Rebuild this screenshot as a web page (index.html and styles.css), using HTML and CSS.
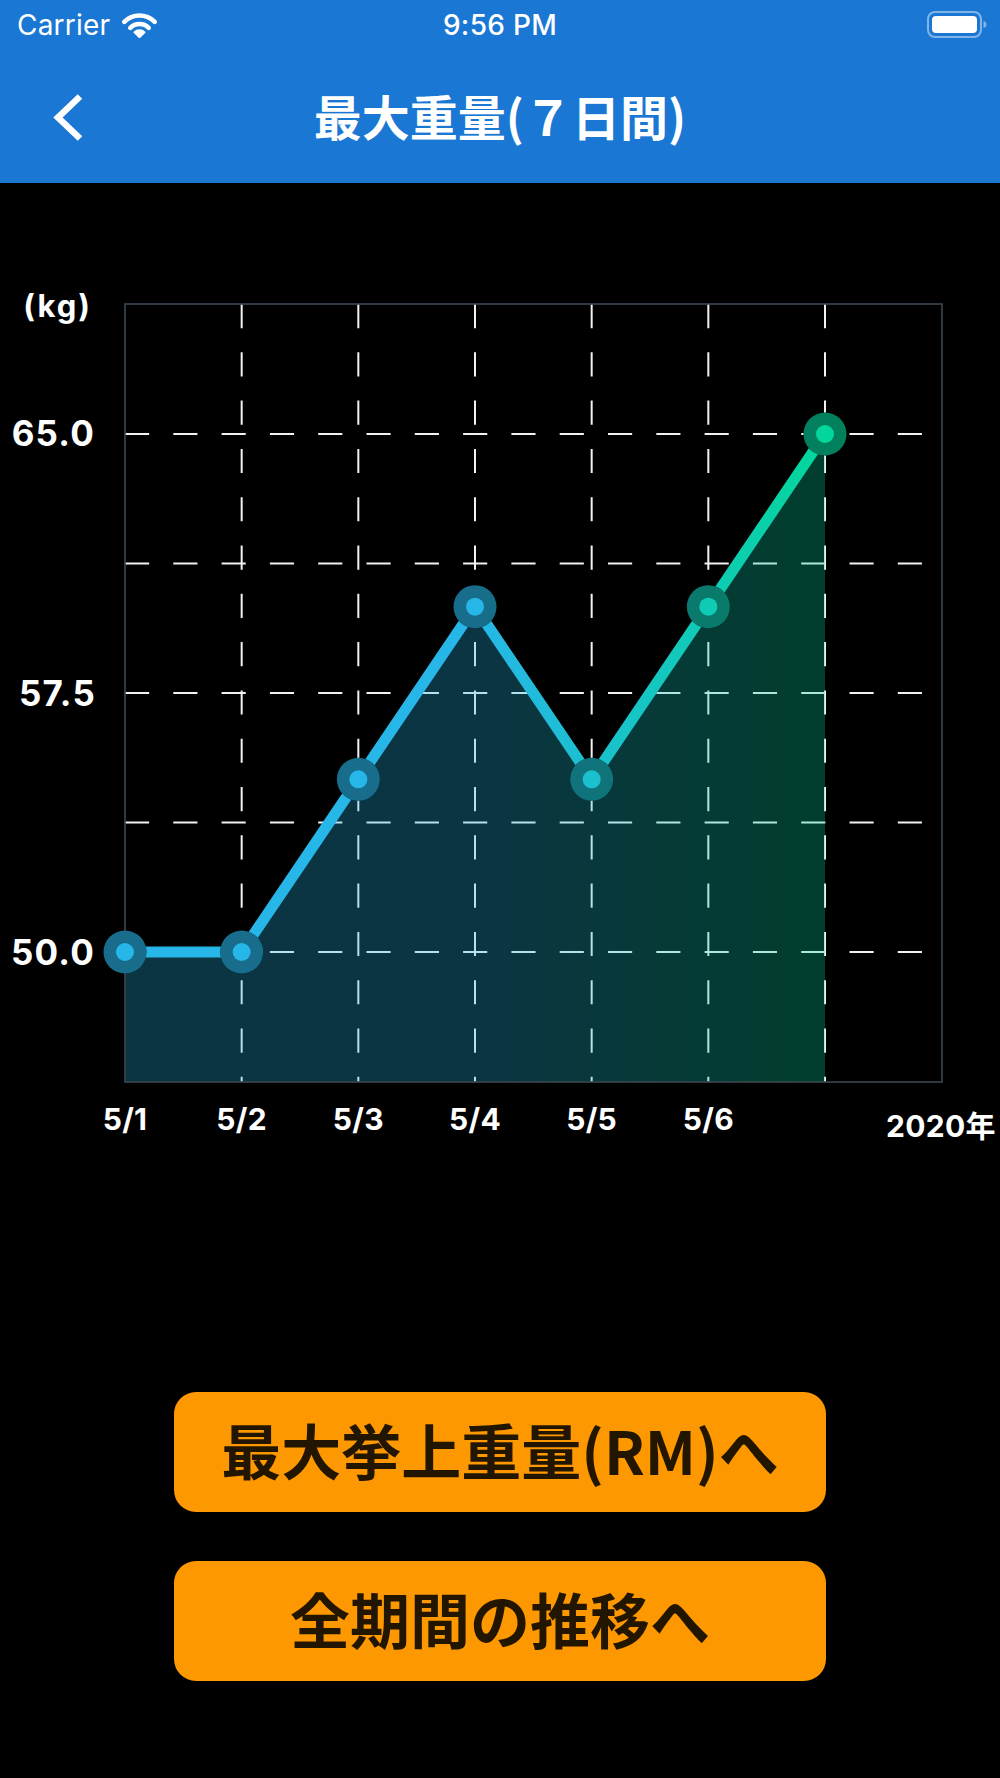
FILE: index.html
```html
<!DOCTYPE html>
<html lang="ja">
<head>
<meta charset="utf-8">
<title>最大重量(７日間)</title>
<link rel="stylesheet" href="styles.css">
</head>
<body>
<div class="screen">
  <header class="appbar">
    <div class="statusbar">
      <div class="sb-left">
        <span class="carrier">Carrier</span>
        <svg class="wifi" width="37" height="26" viewBox="0 0 37 26">
          <path d="M3.3 9.8 A21.5 21.5 0 0 1 33.7 9.8" fill="none" stroke="#fff" stroke-width="4.6" stroke-linecap="round"/>
          <path d="M9.3 15.8 A13 13 0 0 1 27.7 15.8" fill="none" stroke="#fff" stroke-width="4.6" stroke-linecap="round"/>
          <path d="M18.5 25.5 L13.2 20.2 A7.5 7.5 0 0 1 23.8 20.2 Z" fill="#fff" stroke="#fff" stroke-width="1.5" stroke-linejoin="round"/>
        </svg>
      </div>
      <div class="sb-time">9:56 PM</div>
      <div class="sb-right">
        <svg class="battery" width="60" height="28" viewBox="0 0 60 28">
          <rect x="1" y="1" width="53" height="25" rx="7" fill="none" stroke="#fff" stroke-opacity="0.45" stroke-width="2"/>
          <rect x="5" y="5" width="45" height="17" rx="4" fill="#fff"/>
          <path d="M56.5 10 Q59.5 10.5 59.5 13.5 Q59.5 16.5 56.5 17 Z" fill="#fff" fill-opacity="0.45"/>
        </svg>
      </div>
    </div>
    <nav class="navbar">
      <div class="nav-left">
        <button class="back" aria-label="戻る">
          <svg width="32" height="50" viewBox="0 0 32 50">
            <polyline points="28,4.5 6,25.5 28,46.5" fill="none" stroke="#fff" stroke-width="6.5" stroke-linejoin="miter"/>
          </svg>
        </button>
      </div>
      <h1 class="title">最大重量(７日間)</h1>
      <div class="nav-right"></div>
    </nav>
  </header>

  <main class="content">
    <figure class="chart">
      <svg class="chart-svg" width="1000" height="1000" viewBox="0 183 1000 1000">
        <defs>
          <linearGradient id="lg" gradientUnits="userSpaceOnUse" x1="125" y1="0" x2="825" y2="0">
            <stop offset="0" stop-color="#27b6e8"/>
            <stop offset="0.5" stop-color="#27b6e8"/>
            <stop offset="1" stop-color="#03d69b"/>
          </linearGradient>
        </defs>

        <g class="grid">
          <line x1="125" y1="434" x2="942" y2="434"/>
          <line x1="125" y1="563.5" x2="942" y2="563.5"/>
          <line x1="125" y1="693" x2="942" y2="693"/>
          <line x1="125" y1="822.5" x2="942" y2="822.5"/>
          <line x1="125" y1="952" x2="942" y2="952"/>
          <line x1="241.67" y1="304" x2="241.67" y2="1082"/>
          <line x1="358.33" y1="304" x2="358.33" y2="1082"/>
          <line x1="475" y1="304" x2="475" y2="1082"/>
          <line x1="591.67" y1="304" x2="591.67" y2="1082"/>
          <line x1="708.33" y1="304" x2="708.33" y2="1082"/>
          <line x1="825" y1="304" x2="825" y2="1082"/>
        </g>

        <polygon class="area" points="125,1082 125,952 241.67,952 358.33,779.3 475,606.7 591.67,779.3 708.33,606.7 825,434 825,1082"/>

        <rect class="frame" x="125" y="304" width="817" height="778"/>

        <polyline class="series" points="125,952 241.67,952 358.33,779.3 475,606.7 591.67,779.3 708.33,606.7 825,434"/>

        <g class="pt"><circle class="pt-bg" cx="125" cy="952" r="21.5"/><circle class="pt-ring" cx="125" cy="952" r="21.5"/><circle class="pt-dot" cx="125" cy="952" r="9"/></g>
        <g class="pt"><circle class="pt-bg" cx="241.67" cy="952" r="21.5"/><circle class="pt-ring" cx="241.67" cy="952" r="21.5"/><circle class="pt-dot" cx="241.67" cy="952" r="9"/></g>
        <g class="pt"><circle class="pt-bg" cx="358.33" cy="779.3" r="21.5"/><circle class="pt-ring" cx="358.33" cy="779.3" r="21.5"/><circle class="pt-dot" cx="358.33" cy="779.3" r="9"/></g>
        <g class="pt"><circle class="pt-bg" cx="475" cy="606.7" r="21.5"/><circle class="pt-ring" cx="475" cy="606.7" r="21.5"/><circle class="pt-dot" cx="475" cy="606.7" r="9"/></g>
        <g class="pt"><circle class="pt-bg" cx="591.67" cy="779.3" r="21.5"/><circle class="pt-ring" cx="591.67" cy="779.3" r="21.5"/><circle class="pt-dot" cx="591.67" cy="779.3" r="9"/></g>
        <g class="pt"><circle class="pt-bg" cx="708.33" cy="606.7" r="21.5"/><circle class="pt-ring" cx="708.33" cy="606.7" r="21.5"/><circle class="pt-dot" cx="708.33" cy="606.7" r="9"/></g>
        <g class="pt"><circle class="pt-bg" cx="825" cy="434" r="21.5"/><circle class="pt-ring" cx="825" cy="434" r="21.5"/><circle class="pt-dot" cx="825" cy="434" r="9"/></g>

        <g class="ylabels">
          <text class="unit" x="92" y="317">(kg)</text>
          <text x="95" y="446">65.0</text>
          <text x="96" y="705.5">57.5</text>
          <text x="95" y="965">50.0</text>
        </g>
        <g class="xlabels">
          <text x="125" y="1130">5/1</text>
          <text x="241.67" y="1130">5/2</text>
          <text x="358.33" y="1130">5/3</text>
          <text x="475" y="1130">5/4</text>
          <text x="591.67" y="1130">5/5</text>
          <text x="708.33" y="1130">5/6</text>
          <text class="year" x="886" y="1137">2020年</text>
        </g>
      </svg>
    </figure>

    <div class="actions">
      <button class="btn">最大挙上重量(RM)へ</button>
      <button class="btn">全期間の推移へ</button>
    </div>
  </main>
</div>
</body>
</html>
```

FILE: styles.css
```css
* {
  box-sizing: border-box;
}

html, body {
  margin: 0;
  padding: 0;
  background: #000;
}

.screen {
  width: 1000px;
  height: 1778px;
  overflow: hidden;
  background: #000;
  display: flex;
  flex-direction: column;
}

/* ---------- header ---------- */
.appbar {
  background: #1a77d3;
  height: 183px;
  display: flex;
  flex-direction: column;
  color: #fff;
}

.statusbar {
  height: 50px;
  display: grid;
  grid-template-columns: 1fr auto 1fr;
  align-items: center;
  font-family: "Inter", "Liberation Sans", sans-serif;
  font-size: 28px;
  line-height: 1;
}

.sb-left {
  display: flex;
  align-items: center;
  padding-left: 17px;
}

.carrier {
  font-weight: 400;
  letter-spacing: 0.2px;
}

.wifi {
  margin-left: 11px;
  margin-top: -1px;
}

.sb-time {
  font-weight: 500;
  letter-spacing: 0.3px;
}

.sb-right {
  display: flex;
  justify-content: flex-end;
  padding-right: 13px;
}

.battery {
  display: block;
  margin-top: -1px;
}

.navbar {
  flex: 1;
  display: grid;
  grid-template-columns: 1fr auto 1fr;
  align-items: center;
}

.nav-left {
  display: flex;
  align-items: center;
  padding-left: 52px;
}

.back {
  background: none;
  border: 0;
  padding: 0;
  margin: 0;
  display: block;
  line-height: 0;
}

.back svg {
  display: block;
}

.title {
  margin: 0;
  font-family: "Noto Sans CJK JP", "Noto Sans CJK SC", sans-serif;
  font-weight: 700;
  font-size: 48px;
  line-height: 1;
  color: #fff;
  margin-top: -3px;
}

/* ---------- chart ---------- */
.content {
  display: flex;
  flex-direction: column;
}

.chart {
  margin: 0;
  height: 1000px;
}

.chart-svg {
  display: block;
}

.grid line {
  stroke: #f2f2f2;
  stroke-width: 2;
  stroke-dasharray: 24.15 24.15;
}

.area {
  fill: url(#lg);
  fill-opacity: 0.29;
}

.frame {
  fill: none;
  stroke: #3c4651;
  stroke-width: 1.6;
}

.series {
  fill: none;
  stroke: url(#lg);
  stroke-width: 11;
  stroke-linejoin: round;
}

.pt-bg {
  fill: #000;
}

.pt-ring {
  fill: url(#lg);
  fill-opacity: 0.6;
}

.pt-dot {
  fill: url(#lg);
}

.ylabels text,
.xlabels text {
  font-family: "Inter", "Noto Sans CJK JP", sans-serif;
  font-weight: 700;
  fill: #fff;
}

.ylabels text {
  font-size: 35px;
  text-anchor: end;
  letter-spacing: 1.2px;
}

.ylabels .unit {
  font-size: 31px;
  letter-spacing: 2px;
}

.xlabels text {
  font-size: 30px;
  text-anchor: middle;
  letter-spacing: 0.3px;
}

.xlabels .year {
  text-anchor: start;
}

/* ---------- buttons ---------- */
.actions {
  display: flex;
  flex-direction: column;
  align-items: center;
  gap: 49px;
  margin-top: 209px;
}

.btn {
  width: 652px;
  height: 120px;
  border: 0;
  border-radius: 22px;
  background: #fe9800;
  color: #221600;
  font-family: "Noto Sans CJK JP", "Noto Sans CJK SC", sans-serif;
  font-weight: 700;
  font-size: 60px;
  line-height: 1;
  padding: 0 0 6px;
  display: flex;
  align-items: center;
  justify-content: center;
}
```
